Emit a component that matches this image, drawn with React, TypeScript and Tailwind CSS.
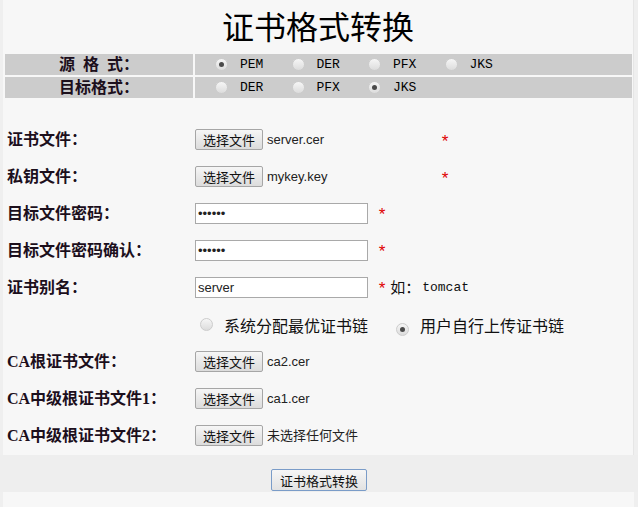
import React from "react";

const serif = { fontFamily: '"Liberation Serif", "Noto Sans CJK SC", serif' };

function Radio({ checked }: { checked?: boolean }) {
  return (
    <span className="inline-flex w-[13px] h-[13px] rounded-full border border-[#cccccc] bg-[linear-gradient(#f6f6f6,#dcdcdc)] items-center justify-center shrink-0">
      {checked && <span className="w-[5px] h-[5px] rounded-full bg-[#4a4a4a]" />}
    </span>
  );
}

function Opt({ label, checked }: { label: string; checked?: boolean }) {
  return (
    <span className="inline-flex items-center w-[76.5px]">
      <Radio checked={checked} />
      <span className="ml-[12px] text-[13px] text-black font-['Liberation_Mono',monospace] mt-[1px]">{label}</span>
    </span>
  );
}

function FileBtn() {
  return (
    <span className="inline-flex items-center justify-center w-[68px] h-[21px] border border-[#a6a6a6] rounded-[2px] bg-[linear-gradient(#f6f6f6,#dcdcdc)] text-[13px] text-[#111] font-['Noto_Sans_CJK_SC',sans-serif] leading-none">
      选择文件
    </span>
  );
}

function Star() {
  return (
    <span className="inline-block text-[#e00000] text-[17px] leading-none pt-[5px] font-['Liberation_Mono',monospace]">*</span>
  );
}

function Row({ label, children }: { label: string; children?: React.ReactNode }) {
  return (
    <div className="flex items-center h-[37px]">
      <div className="w-[195px] pl-[7px] text-[16px] font-bold text-[#1c0f1c] whitespace-nowrap" style={serif}>
        {label}
      </div>
      <div className="flex items-center">{children}</div>
    </div>
  );
}

function FileRow({ label, file, star }: { label: string; file: string; star?: boolean }) {
  return (
    <Row label={label}>
      <div className="flex items-center w-[245px]">
        <FileBtn />
        <span className="ml-[4px] text-[13px] text-[#222] font-['Liberation_Sans','Noto_Sans_CJK_SC',sans-serif]">{file}</span>
      </div>
      {star && <Star />}
    </Row>
  );
}

function InputRow({ label, value, type, extra }: { label: string; value: string; type: string; extra?: React.ReactNode }) {
  return (
    <Row label={label}>
      <input
        readOnly
        type={type}
        value={value}
        className="w-[173px] h-[21px] border border-[#a9a9a9] bg-white px-[2px] text-[13px] text-[#222] font-['Liberation_Sans',sans-serif] outline-none"
      />
      <span className="ml-[9px]"><Star /></span>
      {extra}
    </Row>
  );
}

export default function App() {
  return (
    <div className="w-[638px] h-[507px] bg-[#efefef] overflow-hidden">
      <div className="ml-[3px] w-[631px] bg-[#f7f7f7] border-r border-[#e6e6e6] h-[455px] flex flex-col">
        <div className="h-[54px] flex items-center justify-center">
          <h1 className="text-[32px] text-black leading-none mt-[1px]" style={serif}>
            证书格式转换
          </h1>
        </div>
        <div className="flex flex-col gap-[2px] ml-[2px] mr-[1px]">
          <div className="flex h-[21px] gap-[2px]">
            <div className="w-[188px] bg-[#cccccc] flex items-center justify-center text-[16px] font-bold text-[#1c0f1c]" style={serif}>
              <span>源</span>
              <span className="ml-[8px]">格</span>
              <span className="ml-[8px]">式：</span>
            </div>
            <div className="flex-1 bg-[#cccccc] flex items-center pl-[20px]">
              <Opt label="PEM" checked />
              <Opt label="DER" />
              <Opt label="PFX" />
              <Opt label="JKS" />
            </div>
          </div>
          <div className="flex h-[21px] gap-[2px]">
            <div className="w-[188px] bg-[#cccccc] flex items-center justify-center text-[16px] font-bold text-[#1c0f1c]" style={serif}>
              目标格式：
            </div>
            <div className="flex-1 bg-[#cccccc] flex items-center pl-[20px]">
              <Opt label="DER" />
              <Opt label="PFX" />
              <Opt label="JKS" checked />
            </div>
          </div>
        </div>
        <div className="mt-[23px] -ml-[3px]">
          <FileRow label="证书文件：" file="server.cer" star />
          <FileRow label="私钥文件：" file="mykey.key" star />
          <InputRow label="目标文件密码：" value="123456" type="password" />
          <InputRow label="目标文件密码确认：" value="123456" type="password" />
          <InputRow
            label="证书别名："
            value="server"
            type="text"
            extra={
              <span className="ml-[3px] flex items-center text-[#111]">
                <span className="text-[15px] font-['Noto_Sans_CJK_SC',sans-serif]">如：</span>
                <span className="ml-[2px] text-[13px] font-['Liberation_Mono',monospace]">tomcat</span>
              </span>
            }
          />
          <div className="flex items-center h-[37px] pl-[200px] text-[16px] text-[#111] font-['Noto_Sans_CJK_SC',sans-serif]">
            <Radio />
            <span className="ml-[11px]">系统分配最优证书链</span>
            <span className="ml-[28px]"><Radio checked /></span>
            <span className="ml-[11px]">用户自行上传证书链</span>
          </div>
          <FileRow label="CA根证书文件：" file="ca2.cer" />
          <FileRow label="CA中级根证书文件1：" file="ca1.cer" />
          <FileRow label="CA中级根证书文件2：" file="未选择任何文件" />
        </div>
      </div>
      <div className="h-[37px] bg-[#eeeeee] flex items-center justify-center">
        <button className="w-[96px] h-[22px] mt-[13px] border border-[#7a9cc8] rounded-[2px] bg-[linear-gradient(#f6f6f6,#e2e2e2)] text-[13px] text-[#111] font-['Noto_Sans_CJK_SC',sans-serif] leading-none">
          证书格式转换
        </button>
      </div>
      <div className="ml-[3px] w-[631px] h-[15px] bg-[#f7f7f7]" />
    </div>
  );
}
